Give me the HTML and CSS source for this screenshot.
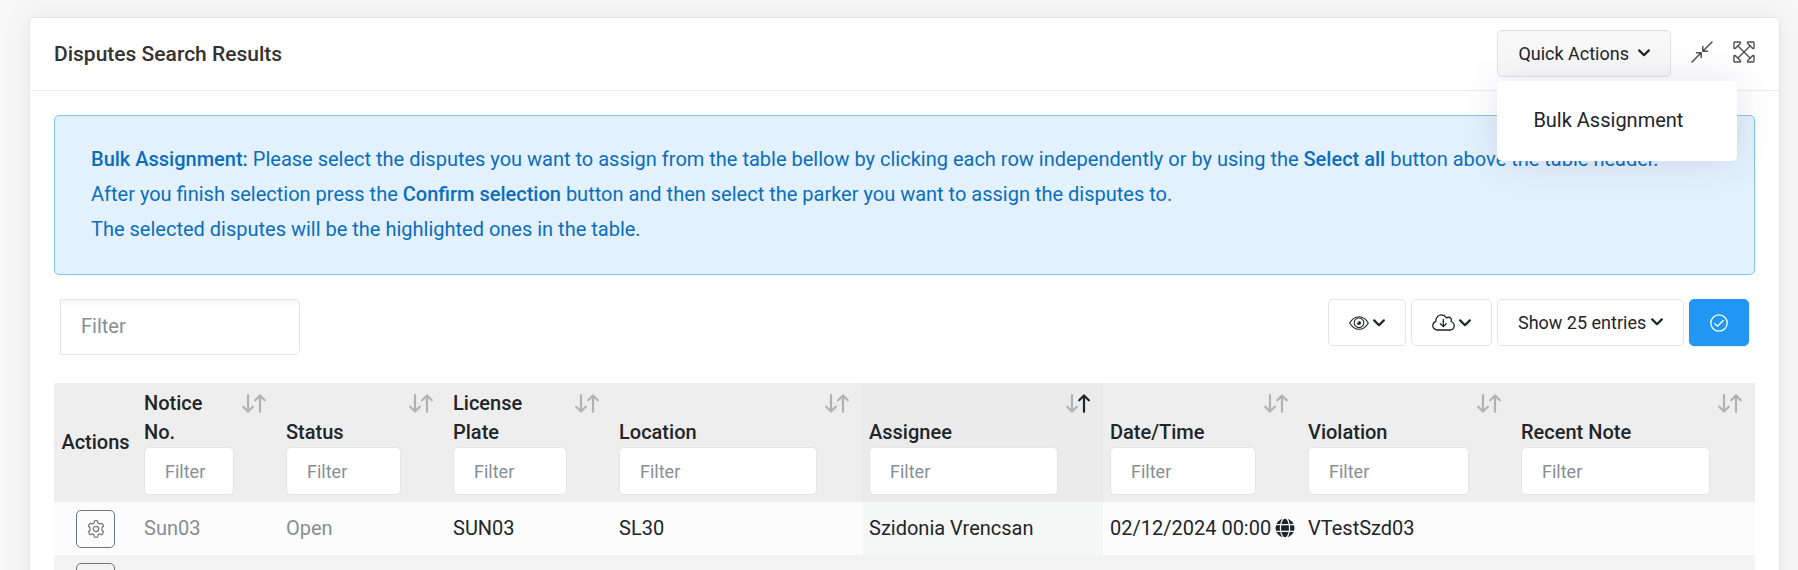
FILE: index.html
```html
<!DOCTYPE html>
<html lang="en">
<head>
    <meta charset="utf-8">
    <meta name="viewport" content="width=device-width, initial-scale=1">
    <title>Disputes Search Results</title>
    <link rel="stylesheet" href="styles.css">
</head>
<body>
    <!-- Shared icons -->
    <svg class="sprite" aria-hidden="true">
        <symbol id="chevron" viewBox="0 0 12 8">
            <path d="M1.2 1.4L6 6.2l4.800-4.800" fill="none" stroke="currentColor" stroke-width="2.200" stroke-linecap="round" stroke-linejoin="round"/>
        </symbol>
        <symbol id="arrow-up" viewBox="0 0 12 19">
            <path d="M6 17.800V2M1.200 6.300L6 1.500l4.800 4.800" fill="none" stroke="currentColor" stroke-width="2.200" stroke-linecap="round" stroke-linejoin="round"/>
        </symbol>
        <symbol id="arrow-down" viewBox="0 0 12 19">
            <path d="M6 1.200V17M1.200 12.700L6 17.500l4.800-4.800" fill="none" stroke="currentColor" stroke-width="2.200" stroke-linecap="round" stroke-linejoin="round"/>
        </symbol>
        <symbol id="gear" viewBox="0 0 18 18">
            <g fill="none" stroke="currentColor" stroke-width="1.200" stroke-linejoin="round">
                <path d="M7.300 1Q9 .4 10.700 1L11.100 3.200L12.600 4.100L14.800 3.300Q16.100 4.500 16.600 6.300L14.900 7.800V10.200L16.600 11.700Q16.100 13.500 14.800 14.700L12.600 13.900L11.100 14.800L10.700 17Q9 17.600 7.300 17L6.900 14.800L5.400 13.900L3.200 14.700Q1.900 13.500 1.400 11.700L3.100 10.200V7.800L1.400 6.300Q1.900 4.500 3.200 3.300L5.400 4.100L6.900 3.200Z"/>
                <circle cx="9" cy="9" r="2.700"/>
            </g>
        </symbol>
    </svg>

    <div class="panel">
        <div class="panel-header">
            <h2 class="panel-title">Disputes Search Results</h2>
            <div class="panel-toolbar">
                <div class="dropdown">
                    <button type="button" class="btn btn-active" aria-expanded="true">
                        Quick Actions
                        <svg class="chevron chevron-spaced"><use href="#chevron"/></svg>
                    </button>
                    <div class="dropdown-menu">
                        <a class="dropdown-item" href="#">Bulk Assignment</a>
                    </div>
                </div>
                <button type="button" class="icon-btn" aria-label="Collapse">
                    <svg width="22" height="22" viewBox="0 0 22 22" fill="none" stroke="currentColor" stroke-width="1.500" stroke-linecap="round" stroke-linejoin="round">
                        <path d="M1 21L10.200 11.800M5.500 11.800h4.700v4.700M21 1L11.800 10.200M11.800 5.500v4.700h4.700"/>
                    </svg>
                </button>
                <button type="button" class="icon-btn" aria-label="Fullscreen">
                    <svg width="22" height="22" viewBox="0 0 22 22" fill="none" stroke="currentColor" stroke-width="1.400" stroke-linejoin="round">
                        <path d="M4.500 4.500l13 13M17.500 4.500l-13 13"/>
                        <path d="M1 7.200V1.900Q1 1 1.900 1H7.200L7.500 2.200L2.200 7.500ZM14.800 1h5.300q.9 0 .9.900v5.300l-1.200.3L14.500 2.200ZM21 14.800v5.300q0 .9-.9.900h-5.300l-.3-1.200L19.800 14.500ZM7.200 21H1.900Q1 21 1 20.100v-5.300l1.200-.3L7.500 19.800Z"/>
                    </svg>
                </button>
            </div>
        </div>

        <div class="panel-body">
            <div class="alert">
                <strong>Bulk Assignment:</strong> Please select the disputes you want to assign from the table bellow by clicking each row independently or by using the <strong>Select all</strong> button above the table header.<br>
                After you finish selection press the <strong>Confirm selection</strong> button and then select the parker you want to assign the disputes to.<br>
                The selected disputes will be the highlighted ones in the table.
            </div>

            <div class="table-toolbar">
                <input type="text" class="search-input" placeholder="Filter" aria-label="Filter all disputes">
                <div class="table-buttons">
                    <button type="button" class="btn" aria-label="Column visibility">
                        <svg width="20" height="14" viewBox="0 0 20 14" fill="none" stroke="currentColor" stroke-width="1.100">
                            <path d="M.7 7Q4.200.7 10 .7T19.300 7Q15.800 13.300 10 13.300T.7 7Z"/>
                            <circle cx="10" cy="6.800" r="4.800"/>
                            <path d="M10 5.200a1.800 1.800 0 1 1-1.800 1.800q1.500.2 1.800-1.800Z" fill="currentColor" stroke-width=".6"/>
                        </svg>
                        <svg class="chevron"><use href="#chevron"/></svg>
                    </button>
                    <button type="button" class="btn" aria-label="Export">
                        <svg width="23" height="17" viewBox="0 0 23 17" fill="none" stroke="currentColor" stroke-width="1.300" stroke-linecap="round" stroke-linejoin="round">
                            <path d="M5.200 16Q.8 15.500.8 11.600Q.9 8.500 3.900 7.400Q3.600 3.300 7.200 1.500Q11.700-.3 14.500 3.900Q17.200 2.300 18.900 4.400Q19.700 5.700 19 7.500Q22.200 8.600 22.200 12Q22 15.700 18 16Z"/>
                            <path d="M11.300 5.500v6.800M8.400 9.700l2.900 2.900l2.900-2.900"/>
                        </svg>
                        <svg class="chevron"><use href="#chevron"/></svg>
                    </button>
                    <div class="select-wrap">
                        <select class="btn page-size" aria-label="Entries per page">
                            <option>Show 10 entries</option>
                            <option selected>Show 25 entries</option>
                            <option>Show 50 entries</option>
                        </select>
                        <svg class="chevron"><use href="#chevron"/></svg>
                    </div>
                    <button type="button" class="btn btn-primary" aria-label="Select all">
                        <svg width="18" height="18" viewBox="0 0 18 18" fill="none" stroke="currentColor" stroke-width="1.300" stroke-linecap="round" stroke-linejoin="round">
                            <circle cx="9" cy="9" r="8.200"/>
                            <path d="M4.800 9.600l2.800 2.700l5.600-5.800"/>
                        </svg>
                    </button>
                </div>
            </div>

            <table class="disputes">
                <colgroup>
                    <col class="col-actions">
                    <col class="col-notice">
                    <col class="col-status">
                    <col class="col-plate">
                    <col class="col-location">
                    <col class="col-assignee">
                    <col class="col-date">
                    <col class="col-violation">
                    <col class="col-note">
                </colgroup>
                <thead>
                    <tr>
                        <th class="actions">Actions</th>
                        <th>
                            <label for="f-notice">Notice<br>No.</label>
                            <input type="text" id="f-notice" placeholder="Filter">
                            <span class="sort"><svg><use href="#arrow-down"/></svg><svg><use href="#arrow-up"/></svg></span>
                        </th>
                        <th>
                            <label for="f-status">Status</label>
                            <input type="text" id="f-status" placeholder="Filter">
                            <span class="sort"><svg><use href="#arrow-down"/></svg><svg><use href="#arrow-up"/></svg></span>
                        </th>
                        <th>
                            <label for="f-plate">License<br>Plate</label>
                            <input type="text" id="f-plate" placeholder="Filter">
                            <span class="sort"><svg><use href="#arrow-down"/></svg><svg><use href="#arrow-up"/></svg></span>
                        </th>
                        <th>
                            <label for="f-location">Location</label>
                            <input type="text" id="f-location" placeholder="Filter">
                            <span class="sort"><svg><use href="#arrow-down"/></svg><svg><use href="#arrow-up"/></svg></span>
                        </th>
                        <th class="sorted">
                            <label for="f-assignee">Assignee</label>
                            <input type="text" id="f-assignee" placeholder="Filter">
                            <span class="sort"><svg><use href="#arrow-down"/></svg><svg class="on"><use href="#arrow-up"/></svg></span>
                        </th>
                        <th>
                            <label for="f-date">Date/Time</label>
                            <input type="text" id="f-date" placeholder="Filter">
                            <span class="sort"><svg><use href="#arrow-down"/></svg><svg><use href="#arrow-up"/></svg></span>
                        </th>
                        <th>
                            <label for="f-violation">Violation</label>
                            <input type="text" id="f-violation" placeholder="Filter">
                            <span class="sort"><svg><use href="#arrow-down"/></svg><svg><use href="#arrow-up"/></svg></span>
                        </th>
                        <th>
                            <label for="f-note">Recent Note</label>
                            <input type="text" id="f-note" placeholder="Filter">
                            <span class="sort"><svg><use href="#arrow-down"/></svg><svg><use href="#arrow-up"/></svg></span>
                        </th>
                    </tr>
                </thead>
                <tbody>
                    <tr>
                        <td class="actions"><button type="button" class="gear-btn" aria-label="Actions"><svg width="18" height="18"><use href="#gear"/></svg></button></td>
                        <td class="muted">Sun03</td>
                        <td class="muted">Open</td>
                        <td>SUN03</td>
                        <td>SL30</td>
                        <td class="sorted">Szidonia Vrencsan</td>
                        <td>
                            <span class="date">02/12/2024 00:00
                                <svg width="20" height="20" viewBox="0 0 20 20">
                                    <circle cx="10" cy="10" r="9.500" fill="currentColor"/>
                                    <g fill="none" stroke="#fcfcfc" stroke-width="1.200">
                                        <ellipse cx="10" cy="10" rx="4.600" ry="10"/>
                                        <path d="M0 6.600h20M0 13.400h20"/>
                                    </g>
                                </svg>
                            </span>
                        </td>
                        <td>VTestSzd03</td>
                        <td></td>
                    </tr>
                    <tr>
                        <td class="actions"><button type="button" class="gear-btn" aria-label="Actions"><svg width="18" height="18"><use href="#gear"/></svg></button></td>
                        <td></td>
                        <td></td>
                        <td></td>
                        <td></td>
                        <td class="sorted"></td>
                        <td></td>
                        <td></td>
                        <td></td>
                    </tr>
                </tbody>
            </table>
        </div>
    </div>
</body>
</html>
```
FILE: styles.css
```css
* {
    box-sizing: border-box;
}

body {
    margin: 0;
    padding: 17px 18px 0 29px;
    height: 100vh;
    overflow: hidden;
    background: #f8f8f8;
    color: #212529;
    font-family: Roboto, sans-serif;
    font-size: 20px;
    line-height: 29px;
}

.sprite {
    display: none;
}

.panel {
    background: #fff;
    border: 1px solid #e5e5e5;
    border-radius: 5px;
    box-shadow: 0 0 30px rgba(0, 0, 0, 0.08);
}

.panel-header {
    display: flex;
    align-items: center;
    justify-content: space-between;
    height: 73px;
    padding: 0 24px 2px;
    border-bottom: 1px solid #ebebeb;
}

.panel-title {
    margin: 0;
    padding-top: 2px;
    font-size: 21px;
    font-weight: 500;
    color: #333;
}

.panel-toolbar {
    display: flex;
    align-items: center;
    gap: 20px;
}

.panel-body {
    padding: 24px;
}

/* Buttons */
.btn {
    display: flex;
    align-items: center;
    gap: 4px;
    height: 47px;
    padding: 0 20px;
    background: #fff;
    border: 1px solid #e5e5e5;
    border-radius: 5px;
    color: #212529;
    font-family: inherit;
    font-size: 18px;
    cursor: pointer;
}

.btn-active {
    background: #f8f8f8;
    border-color: #dfe1e3;
}

.btn-primary {
    background: #2196f3;
    border-color: #2196f3;
    color: #fff;
    box-shadow: 0 1px 2px rgba(0, 0, 0, 0.1);
}

.chevron {
    width: 12px;
    height: 8px;
}

.chevron-spaced {
    margin-left: 5px;
}

.icon-btn {
    display: flex;
    padding: 0 0 2px;
    border: 0;
    background: none;
    color: #505050;
    cursor: pointer;
}

.select-wrap {
    position: relative;
}

.select-wrap .chevron {
    position: absolute;
    top: 19px;
    right: 21px;
    pointer-events: none;
}

.page-size {
    appearance: none;
    padding-right: 36px;
}

/* Quick actions menu */
.dropdown {
    position: relative;
}

.dropdown-menu {
    position: absolute;
    z-index: 10;
    top: 51px;
    left: 0;
    width: 240px;
    padding: 12px 0;
    background: #fff;
    border-radius: 5px;
    box-shadow: 0 0 36px rgba(82, 63, 105, 0.15);
}

.dropdown-item {
    display: block;
    padding: 13px 36px 14px;
    color: #212529;
    text-decoration: none;
}

.alert {
    padding: 26px 36px 27px;
    background: #e3f1fd;
    border: 1px solid #82c4f8;
    border-radius: 5px;
    color: #0a6ebd;
    line-height: 35px;
}

.alert strong {
    font-weight: 500;
}

/* Table toolbar */
.table-toolbar {
    display: flex;
    align-items: flex-start;
    justify-content: space-between;
    padding: 24px 6px 28px;
}

.table-buttons {
    display: flex;
    gap: 5px;
}

input {
    background: #fff;
    border: 1px solid #e5e5e5;
    border-radius: 5px;
    padding: 0 20px;
    color: #495057;
    font-family: inherit;
    font-size: 18px;
}

input::placeholder {
    color: #868e96;
    opacity: 1;
}

.search-input {
    width: 240px;
    height: 56px;
    padding-bottom: 2px;
    border-radius: 0 5px 5px 0;
    font-size: 20px;
    box-shadow: inset 0 8px 8px -6px rgba(0, 0, 0, 0.05);
}

/* Disputes table */
.disputes {
    width: 100%;
    table-layout: fixed;
    border-collapse: collapse;
}

.col-actions { width: 83px; }
.col-notice { width: 142px; }
.col-status { width: 167px; }
.col-plate { width: 166px; }
.col-location { width: 250px; }
.col-assignee { width: 241px; }
.col-date { width: 198px; }
.col-violation { width: 213px; }
.col-note { width: 241px; }

.disputes th {
    position: relative;
    padding: 6px 45px 7px 7px;
    background: #eee;
    font-weight: 500;
    text-align: left;
    vertical-align: bottom;
}

.disputes th.sorted {
    background: #ebebeb;
}

.disputes th label,
.disputes th input {
    display: block;
}

.disputes th input {
    width: 100%;
    height: 48px;
}

.disputes td {
    height: 53px;
    padding: 0 7px 1px;
    background: #fcfcfc;
}

.disputes td.sorted {
    background: #f6f8f8;
}

.disputes tr:nth-child(even) td {
    background: #f3f3f3;
}

.disputes .actions {
    padding: 0;
    text-align: center;
    vertical-align: middle;
}

.sort {
    position: absolute;
    top: 11px;
    right: 13px;
    display: flex;
    color: #b1b2b4;
}

.sort svg {
    width: 12px;
    height: 19px;
}

.sort .on {
    color: #212529;
}

.muted {
    color: #868e96;
}

.date {
    display: flex;
    align-items: center;
    gap: 4px;
    white-space: nowrap;
}

.date svg {
    flex: none;
}

.gear-btn {
    display: flex;
    align-items: center;
    justify-content: center;
    width: 39px;
    height: 38px;
    margin: 0 auto;
    padding: 0;
    background: none;
    border: 1px solid #6c757d;
    border-radius: 5px;
    color: #6c757d;
    cursor: pointer;
}
```
